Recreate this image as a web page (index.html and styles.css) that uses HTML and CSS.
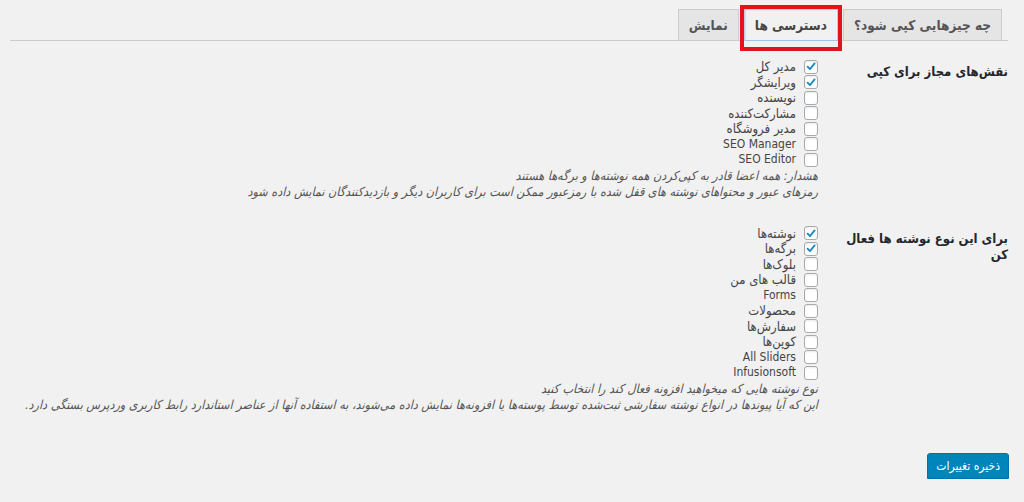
FILE: index.html
```html
<!DOCTYPE html>
<html lang="fa" dir="rtl">
<head>
<meta charset="utf-8">
<title>تنظیمات</title>
<link rel="stylesheet" href="styles.css">
</head>
<body>
<div class="wrap">
  <nav class="tabs">
    <a class="tab">چه چیزهایی کپی شود؟</a>
    <a class="tab active">دسترسی ها<span class="mark"></span></a>
    <a class="tab">نمایش</a>
  </nav>

  <table class="form-table">
    <tr>
      <th>نقش‌های مجاز برای کپی</th>
      <td>
        <label class="opt"><span class="cb on"><svg viewBox="0 0 14 14"><path d="M3 7.2 L5.8 10 L11.2 3.4"/></svg></span><span>مدیر کل</span></label>
        <label class="opt"><span class="cb on"><svg viewBox="0 0 14 14"><path d="M3 7.2 L5.8 10 L11.2 3.4"/></svg></span><span>ویرایشگر</span></label>
        <label class="opt"><span class="cb"></span><span>نویسنده</span></label>
        <label class="opt"><span class="cb"></span><span>مشارکت‌کننده</span></label>
        <label class="opt"><span class="cb"></span><span>مدیر فروشگاه</span></label>
        <label class="opt"><span class="cb"></span><span class="latin">SEO Manager</span></label>
        <label class="opt"><span class="cb"></span><span class="latin">SEO Editor</span></label>
        <p class="description">هشدار: همه اعضا قادر به کپی‌کردن همه نوشته‌ها و برگه‌ها هستند</p>
        <p class="description">رمزهای عبور و محتواهای نوشته های قفل شده با رمزعبور ممکن است برای کاربران دیگر و بازدیدکنندگان نمایش داده شود</p>
      </td>
    </tr>
    <tr>
      <th>برای این نوع نوشته ها فعال کن</th>
      <td>
        <label class="opt"><span class="cb on"><svg viewBox="0 0 14 14"><path d="M3 7.2 L5.8 10 L11.2 3.4"/></svg></span><span>نوشته‌ها</span></label>
        <label class="opt"><span class="cb on"><svg viewBox="0 0 14 14"><path d="M3 7.2 L5.8 10 L11.2 3.4"/></svg></span><span>برگه‌ها</span></label>
        <label class="opt"><span class="cb"></span><span>بلوک‌ها</span></label>
        <label class="opt"><span class="cb"></span><span>قالب های من</span></label>
        <label class="opt"><span class="cb"></span><span class="latin">Forms</span></label>
        <label class="opt"><span class="cb"></span><span>محصولات</span></label>
        <label class="opt"><span class="cb"></span><span>سفارش‌ها</span></label>
        <label class="opt"><span class="cb"></span><span>کوپن‌ها</span></label>
        <label class="opt"><span class="cb"></span><span class="latin">All Sliders</span></label>
        <label class="opt"><span class="cb"></span><span class="latin">Infusionsoft</span></label>
        <p class="description">نوع نوشته هایی که میخواهید افزونه فعال کند را انتخاب کنید</p>
        <p class="description">این که آیا پیوندها در انواع نوشته سفارشی ثبت‌شده توسط پوسته‌ها یا افزونه‌ها نمایش داده می‌شوند، به استفاده آنها از عناصر استاندارد رابط کاربری وردپرس بستگی دارد.</p>
      </td>
    </tr>
  </table>

  <div class="submit">
    <button class="button-primary" type="button">ذخیره تغییرات</button>
  </div>
</div>
</body>
</html>
```

FILE: styles.css
```css
html, body {
  margin: 0;
  padding: 0;
  background: #f1f1f1;
}

body {
  direction: rtl;
  font-family: "DejaVu Sans Condensed", "DejaVu Sans", sans-serif;
  font-size: 13px;
  color: #444;
}

.wrap {
  margin: 0 15px 0 10px;
}

.tabs {
  display: flex;
  gap: 5px;
  padding: 9px 6px 0 0;
  margin-right: 1px;
  border-bottom: 1px solid #ccc;
  height: 31px;
  box-sizing: content-box;
}

.tab {
  position: relative;
  display: block;
  height: 30px;
  line-height: 30px;
  padding: 0 10px;
  border: 1px solid #ccc;
  border-bottom: none;
  background: #e5e5e5;
  color: #555;
  font-size: 13.5px;
  font-weight: bold;
  white-space: nowrap;
}

.tab.active {
  background: #f1f1f1;
  color: #444;
  height: 31px;
  box-shadow: inset 0 -1px 0 #9fc2e6, inset 1px 0 0 #cfe0f2;
}

.tab .mark {
  position: absolute;
  top: -5px;
  right: -5px;
  bottom: -10px;
  left: -5px;
  border: 4px solid #e3131b;
  pointer-events: none;
}

.form-table {
  width: 100%;
  border-collapse: collapse;
  margin-top: 3px;
}

.form-table th {
  width: 170px;
  padding: 20px 1px 20px 10px;
  vertical-align: top;
  text-align: right;
  font-size: 13px;
  font-weight: bold;
  line-height: 16px;
  color: #23282d;
}

.form-table td {
  padding: 15px 10px 11px 10px;
  vertical-align: top;
}

.opt {
  display: flex;
  align-items: center;
  gap: 8px;
  height: 15.5px;
  line-height: 15.5px;
  color: #444;
  white-space: nowrap;
}

.opt .latin {
  font-size: 12px;
}

.cb {
  flex: none;
  width: 12px;
  height: 12px;
  border: 1px solid #a7aaad;
  border-radius: 3px;
  background: #fff;
  box-shadow: inset 0 1px 2px rgba(0, 0, 0, 0.08);
  display: flex;
  align-items: center;
  justify-content: center;
}

.cb svg {
  width: 13px;
  height: 13px;
  fill: none;
  stroke: #1e8cbe;
  stroke-width: 2.2;
  stroke-linecap: round;
  stroke-linejoin: round;
}

.description {
  margin: 0;
  line-height: 16px;
  font-style: italic;
  color: #555;
  font-size: 12.5px;
}

.submit {
  margin-top: 29px;
}

.button-primary {
  height: 26px;
  padding: 0 8px;
  border: 1px solid #0073aa;
  border-radius: 3px;
  background: #0085ba;
  color: #fff;
  font-family: inherit;
  font-size: 12px;
  box-shadow: 0 1px 0 #006799;
}
```
